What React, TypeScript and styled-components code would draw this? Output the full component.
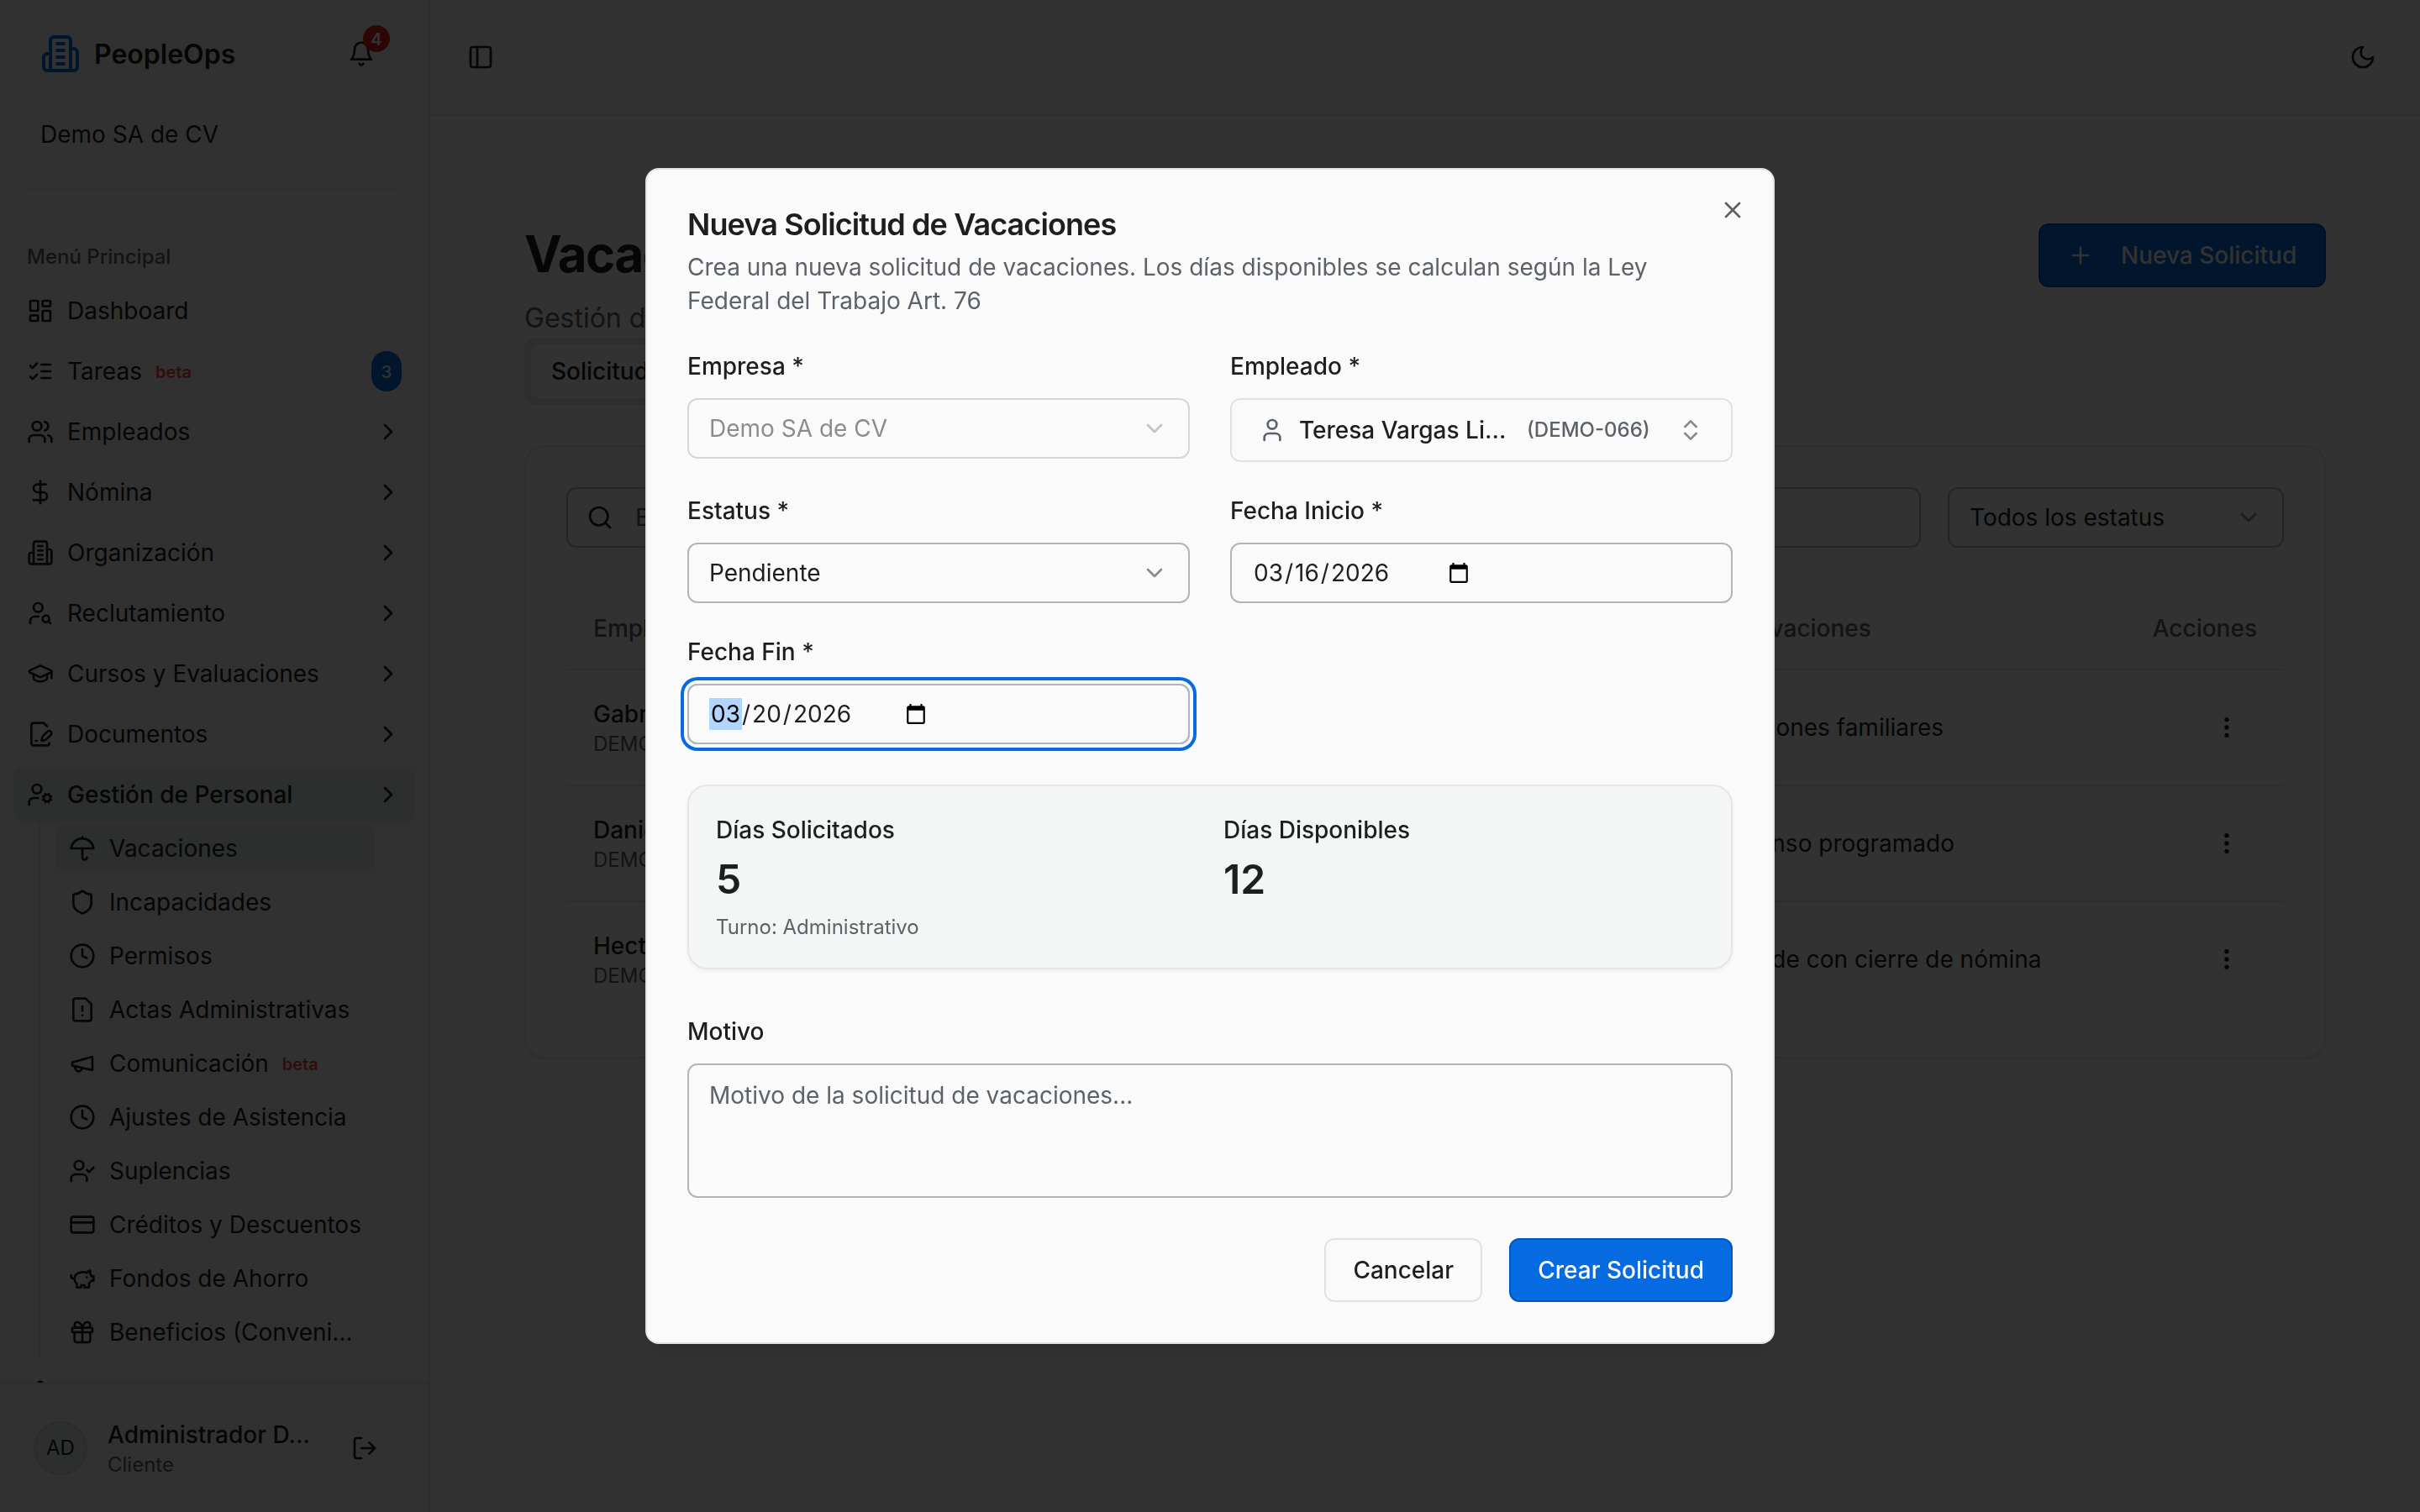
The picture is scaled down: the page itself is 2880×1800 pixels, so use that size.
import type { FunctionComponent, ReactNode } from 'react';
import styled, { createGlobalStyle, css } from 'styled-components';
import {
  ChevronDown,
  ChevronRight,
  ChevronsUpDown,
  CreditCard,
  DollarSign,
  EllipsisVertical,
  GraduationCap,
  LayoutDashboard,
  LogOut,
  PanelLeft,
  Plus,
  Search,
  Shield,
  User,
  UserCog,
  UserSearch,
  Users,
  X,
} from 'lucide-react';

interface IconProps {
  size?: number;
}

type IconType = FunctionComponent<IconProps>;

const makeIcon = (shape: ReactNode): IconType => {
  const Icon: IconType = ({ size = 32 }) => (
    <svg
      width={size}
      height={size}
      viewBox="0 0 24 24"
      fill="none"
      stroke="currentColor"
      strokeWidth={2}
      strokeLinecap="round"
      strokeLinejoin="round"
    >
      {shape}
    </svg>
  );
  return Icon;
};

const BuildingIcon = makeIcon(
  <>
    <path d="M6 22V4a2 2 0 0 1 2-2h8a2 2 0 0 1 2 2v18Z" />
    <path d="M6 12H4a2 2 0 0 0-2 2v6a2 2 0 0 0 2 2h2" />
    <path d="M18 9h2a2 2 0 0 1 2 2v9a2 2 0 0 1-2 2h-2" />
    <path d="M10 6h4M10 10h4M10 14h4M10 18h4" />
  </>,
);

const BellIcon = makeIcon(
  <>
    <path d="M6 8a6 6 0 0 1 12 0c0 7 3 9 3 9H3s3-2 3-9" />
    <path d="M10.3 21a1.94 1.94 0 0 0 3.4 0" />
  </>,
);

const MoonIcon = makeIcon(<path d="M12 3a6 6 0 0 0 9 9 9 9 0 1 1-9-9Z" />);

const ListChecksIcon = makeIcon(
  <path d="m3 17 2 2 4-4M3 7l2 2 4-4M13 6h8M13 12h8M13 18h8" />,
);

const FilePenIcon = makeIcon(
  <>
    <path d="m18 5-2.414-2.414A2 2 0 0 0 14.172 2H6a2 2 0 0 0-2 2v16a2 2 0 0 0 2 2h12a2 2 0 0 0 2-2" />
    <path d="M21.378 12.626a1 1 0 0 0-3.004-3.004l-4.01 4.012a2 2 0 0 0-.506.854l-.837 2.87a.5.5 0 0 0 .62.62l2.87-.837a2 2 0 0 0 .854-.506z" />
    <path d="M8 18h1" />
  </>,
);

const UmbrellaIcon = makeIcon(
  <>
    <path d="M22 12a10.06 10.06 1 0 0-20 0Z" />
    <path d="M12 12v8a2 2 0 0 0 4 0" />
    <path d="M12 2v1" />
  </>,
);

const ClockIcon = makeIcon(
  <>
    <circle cx="12" cy="12" r="10" />
    <path d="M12 6v6l4 2" />
  </>,
);

const FileWarningIcon = makeIcon(
  <>
    <path d="M15 2H6a2 2 0 0 0-2 2v16a2 2 0 0 0 2 2h12a2 2 0 0 0 2-2V7Z" />
    <path d="M12 9v4" />
    <path d="M12 17h.01" />
  </>,
);

const MegaphoneIcon = makeIcon(
  <>
    <path d="m3 11 18-5v12L3 14v-3z" />
    <path d="M11.6 16.8a3 3 0 1 1-5.8-1.6" />
  </>,
);

const UserCheckIcon = makeIcon(
  <>
    <path d="M16 21v-2a4 4 0 0 0-4-4H6a4 4 0 0 0-4 4v2" />
    <circle cx="9" cy="7" r="4" />
    <path d="m16 11 2 2 4-4" />
  </>,
);

const PiggyBankIcon = makeIcon(
  <>
    <path d="M19 5c-1.5 0-2.8 1.4-3 2-3.5-1.5-11-.3-11 5 0 1.8 0 3 2 4.5V20h4v-2h3v2h4v-4c1-.5 1.7-1 2-2h2v-4h-2c0-1-.5-1.5-1-2V5z" />
    <path d="M2 9v1c0 1.1.9 2 2 2h1" />
    <path d="M16 11h.01" />
  </>,
);

const GiftIcon = makeIcon(
  <>
    <rect x="3" y="8" width="18" height="4" rx="1" />
    <path d="M12 8v13" />
    <path d="M19 12v7a2 2 0 0 1-2 2H7a2 2 0 0 1-2-2v-7" />
    <path d="M7.5 8a2.5 2.5 0 0 1 0-5A4.8 8 0 0 1 12 8a4.8 8 0 0 1 4.5-5 2.5 2.5 0 0 1 0 5" />
  </>,
);

const CalendarIcon: IconType = ({ size = 26 }) => (
  <svg width={size} height={size} viewBox="0 0 24 24" fill="#000">
    <path d="M20 3h-1V1h-2v2H7V1H5v2H4c-1.1 0-2 .9-2 2v16c0 1.1.9 2 2 2h16c1.1 0 2-.9 2-2V5c0-1.1-.9-2-2-2zm0 18H4V8h16v13z" />
  </svg>
);

interface NavEntry {
  label: string;
  icon: IconType;
  beta?: boolean;
  badge?: number;
  active?: boolean;
  expandable?: boolean;
}

const navItems: NavEntry[] = [
  { label: 'Dashboard', icon: LayoutDashboard },
  { label: 'Tareas', icon: ListChecksIcon, beta: true, badge: 3 },
  { label: 'Empleados', icon: Users, expandable: true },
  { label: 'Nómina', icon: DollarSign, expandable: true },
  { label: 'Organización', icon: BuildingIcon, expandable: true },
  { label: 'Reclutamiento', icon: UserSearch, expandable: true },
  { label: 'Cursos y Evaluaciones', icon: GraduationCap, expandable: true },
  { label: 'Documentos', icon: FilePenIcon, expandable: true },
  { label: 'Gestión de Personal', icon: UserCog, expandable: true, active: true },
];

const subItems: NavEntry[] = [
  { label: 'Vacaciones', icon: UmbrellaIcon, active: true },
  { label: 'Incapacidades', icon: Shield },
  { label: 'Permisos', icon: ClockIcon },
  { label: 'Actas Administrativas', icon: FileWarningIcon },
  { label: 'Comunicación', icon: MegaphoneIcon, beta: true },
  { label: 'Ajustes de Asistencia', icon: ClockIcon },
  { label: 'Suplencias', icon: UserCheckIcon },
  { label: 'Créditos y Descuentos', icon: CreditCard },
  { label: 'Fondos de Ahorro', icon: PiggyBankIcon },
  { label: 'Beneficios (Conveni…', icon: GiftIcon },
];

const requests = [
  { name: 'Gabriela', code: 'DEMO-012', notes: 'Vacaciones familiares' },
  { name: 'Daniel', code: 'DEMO-024', notes: 'Descanso programado' },
  { name: 'Hector', code: 'DEMO-031', notes: 'Coincide con cierre de nómina' },
];

const Sidebar: FunctionComponent = () => (
  <SidebarRoot>
    <SidebarHeader>
      <BrandRow>
        <Brand>
          <BrandMark>
            <BuildingIcon size={48} />
          </BrandMark>
          <BrandName>PeopleOps</BrandName>
        </Brand>
        <BellButton>
          <BellIcon />
          <BellCount>4</BellCount>
        </BellButton>
      </BrandRow>
      <Company>Demo SA de CV</Company>
    </SidebarHeader>
    <SidebarSeparator />
    <SidebarScroll>
      <GroupLabel>Menú Principal</GroupLabel>
      <NavList>
        {navItems.map(({ label, icon: Icon, beta, badge, active, expandable }) => (
          <NavRow key={label} $active={active}>
            <Icon size={32} />
            <span>{label}</span>
            {beta && <Beta>beta</Beta>}
            {badge && <NavBadge>{badge}</NavBadge>}
            {expandable && (
              <NavChevron>
                <ChevronRight size={32} />
              </NavChevron>
            )}
          </NavRow>
        ))}
      </NavList>
      <SubList>
        {subItems.map(({ label, icon: Icon, beta, active }) => (
          <SubRow key={label} $active={active}>
            <Icon size={32} />
            <span>{label}</span>
            {beta && <Beta>beta</Beta>}
          </SubRow>
        ))}
      </SubList>
      <NextNavRow>
        <Shield size={32} />
      </NextNavRow>
    </SidebarScroll>
    <SidebarFooter>
      <Avatar>AD</Avatar>
      <UserInfo>
        <UserName>Administrador D…</UserName>
        <UserRole>Cliente</UserRole>
      </UserInfo>
      <LogOut size={32} />
    </SidebarFooter>
  </SidebarRoot>
);

const VacationsPage: FunctionComponent = () => (
  <Main>
    <TopBar>
      <PanelLeft size={32} />
      <MoonIcon />
    </TopBar>
    <Content>
      <PageHeader>
        <div>
          <PageTitle>Vacaciones</PageTitle>
          <PageSubtitle>Gestión de solicitudes de vacaciones</PageSubtitle>
        </div>
        <NewButton>
          <Plus size={32} />
          Nueva Solicitud
        </NewButton>
      </PageHeader>
      <Tabs>
        <Tab>Solicitudes</Tab>
      </Tabs>
      <Card>
        <Filters>
          <SearchBox>
            <Search size={32} />
            <span>Buscar...</span>
          </SearchBox>
          <StatusFilter>
            Todos los estatus
            <Faded>
              <ChevronDown size={32} />
            </Faded>
          </StatusFilter>
        </Filters>
        <TableHead>
          <span>Empleado</span>
          <span>Observaciones</span>
          <ActionsHead>Acciones</ActionsHead>
        </TableHead>
        {requests.map(({ name, code, notes }) => (
          <TableRow key={code}>
            <div>
              <EmployeeName>{name}</EmployeeName>
              <EmployeeCode>{code}</EmployeeCode>
            </div>
            <span>{notes}</span>
            <RowMenu>
              <EllipsisVertical size={32} />
            </RowMenu>
          </TableRow>
        ))}
      </Card>
    </Content>
  </Main>
);

interface DateValueProps {
  month: string;
  day: string;
  year: string;
  editing?: boolean;
}

const DateValue: FunctionComponent<DateValueProps> = ({ month, day, year, editing }) => (
  <>
    <DateText>
      <DatePart $selected={editing}>{month}</DatePart>/<DatePart>{day}</DatePart>/
      <DatePart>{year}</DatePart>
    </DateText>
    <CalendarIcon />
  </>
);

const RequestDialog: FunctionComponent = () => (
  <Dialog role="dialog">
    <CloseButton aria-label="Cerrar">
      <X size={32} />
    </CloseButton>
    <DialogTitle>Nueva Solicitud de Vacaciones</DialogTitle>
    <DialogDescription>
      Crea una nueva solicitud de vacaciones. Los días disponibles se calculan según la Ley
      Federal del Trabajo Art. 76
    </DialogDescription>
    <FormGrid>
      <Field>
        <Label>Empresa *</Label>
        <Select $disabled>
          Demo SA de CV
          <Faded>
            <ChevronDown size={32} />
          </Faded>
        </Select>
      </Field>
      <Field>
        <Label>Empleado *</Label>
        <EmployeePicker>
          <User size={32} />
          <PickedName>Teresa Vargas Li…</PickedName>
          <PickedCode>(DEMO-066)</PickedCode>
          <Faded>
            <ChevronsUpDown size={32} />
          </Faded>
        </EmployeePicker>
      </Field>
      <Field>
        <Label>Estatus *</Label>
        <Select>
          Pendiente
          <Faded>
            <ChevronDown size={32} />
          </Faded>
        </Select>
      </Field>
      <Field>
        <Label>Fecha Inicio *</Label>
        <DateInput>
          <DateValue month="03" day="16" year="2026" />
        </DateInput>
      </Field>
      <Field>
        <Label>Fecha Fin *</Label>
        <DateInput $focused>
          <DateValue month="03" day="20" year="2026" editing />
        </DateInput>
      </Field>
    </FormGrid>
    <Summary>
      <div>
        <SummaryLabel>Días Solicitados</SummaryLabel>
        <SummaryValue>5</SummaryValue>
        <SummaryNote>Turno: Administrativo</SummaryNote>
      </div>
      <div>
        <SummaryLabel>Días Disponibles</SummaryLabel>
        <SummaryValue>12</SummaryValue>
      </div>
    </Summary>
    <ReasonField>
      <Label>Motivo</Label>
      <ReasonBox>Motivo de la solicitud de vacaciones...</ReasonBox>
    </ReasonField>
    <DialogFooter>
      <DialogButton>Cancelar</DialogButton>
      <DialogButton $primary>Crear Solicitud</DialogButton>
    </DialogFooter>
  </Dialog>
);

const App: FunctionComponent = () => (
  <>
    <GlobalStyle />
    <Screen>
      <Sidebar />
      <VacationsPage />
    </Screen>
    <Overlay>
      <RequestDialog />
    </Overlay>
  </>
);

const GlobalStyle = createGlobalStyle`
  :root {
    --background: #fafafa;
    --sidebar: #f5f5f5;
    --foreground: #1c1e20;
    --muted: #f4f6f5;
    --muted-foreground: #5c6269;
    --accent: #e1e6e4;
    --border: #e1e3e3;
    --input: #b0b5bb;
    --primary: #066ae1;
    --primary-border: #0058c2;
    --destructive: #dc1c1c;
  }

  * {
    box-sizing: border-box;
  }

  body {
    margin: 0;
    background: var(--background);
    color: var(--foreground);
    font-family: Inter, sans-serif;
    font-size: 28px;
    line-height: 40px;
    overflow: hidden;
  }

  button {
    font: inherit;
    color: inherit;
  }

  svg {
    display: block;
    flex-shrink: 0;
  }
`;

const Screen = styled.div`
  display: flex;
  width: 2880px;
  height: 1800px;
`;

const SidebarRoot = styled.aside`
  display: flex;
  flex-direction: column;
  width: 512px;
  height: 100%;
  background: var(--sidebar);
  border-right: 2px solid var(--border);
`;

const SidebarHeader = styled.div`
  height: 224px;
  padding: 32px 48px 0;
`;

const BrandRow = styled.div`
  display: flex;
  align-items: center;
  justify-content: space-between;
  height: 64px;
`;

const Brand = styled.div`
  display: flex;
  align-items: center;
  gap: 16px;
`;

const BrandMark = styled.span`
  color: var(--primary);
`;

const BrandName = styled.span`
  padding-top: 2px;
  font-size: 32px;
  font-weight: 600;
`;

const BellButton = styled.div`
  position: relative;
  margin-right: 16px;
`;

const BellCount = styled.span`
  position: absolute;
  top: -18px;
  right: -18px;
  display: flex;
  align-items: center;
  justify-content: center;
  width: 32px;
  height: 32px;
  padding-top: 1px;
  border-radius: 50%;
  background: var(--destructive);
  color: var(--background);
  font-size: 20px;
  font-weight: 600;
  line-height: 1;
`;

const Company = styled.div`
  margin-top: 44px;
`;

const SidebarSeparator = styled.div`
  height: 2px;
  margin: 0 32px;
  background: #e9ebeb;
`;

const SidebarScroll = styled.div`
  flex: 1;
  min-height: 0;
  padding: 48px 16px 0;
  overflow: hidden;
`;

const GroupLabel = styled.div`
  display: flex;
  align-items: center;
  height: 64px;
  padding: 0 16px;
  color: var(--muted-foreground);
  font-size: 24px;
  font-weight: 500;
`;

const NavList = styled.div`
  display: flex;
  flex-direction: column;
  gap: 8px;
`;

const NavRow = styled.div<{ $active?: boolean }>`
  display: flex;
  align-items: center;
  gap: 16px;
  height: 64px;
  padding: 0 16px;
  border-radius: 12px;
  background: ${({ $active }) => ($active ? 'var(--accent)' : 'transparent')};
  font-weight: ${({ $active }) => ($active ? 500 : 400)};
`;

const NextNavRow = styled(NavRow)`
  margin-top: 8px;
`;

const NavChevron = styled.span`
  margin-left: auto;
`;

const Beta = styled.span`
  padding-top: 1px;
  color: #ef4444;
  font-size: 20px;
  font-weight: 600;
`;

const NavBadge = styled.span`
  display: flex;
  align-items: center;
  justify-content: center;
  width: 36px;
  height: 48px;
  margin-left: auto;
  padding-top: 1px;
  border-radius: 18px;
  background: var(--primary);
  color: var(--background);
  font-size: 20px;
  font-weight: 500;
`;

const SubList = styled.div`
  display: flex;
  flex-direction: column;
  gap: 8px;
  margin: 0 48px 0 30px;
  padding: 4px 0 4px 18px;
  border-left: 2px solid var(--border);
`;

const SubRow = styled(NavRow)`
  height: 56px;
  font-weight: 400;
`;

const SidebarFooter = styled.div`
  display: flex;
  align-items: center;
  height: 154px;
  padding: 0 60px 0 40px;
  border-top: 2px solid var(--border);
`;

const Avatar = styled.div`
  display: flex;
  align-items: center;
  justify-content: center;
  width: 64px;
  height: 64px;
  margin-right: 24px;
  border: 2px solid #d3d8d6;
  border-radius: 50%;
  background: var(--accent);
  font-size: 24px;
`;

const UserInfo = styled.div`
  flex: 1;
`;

const UserName = styled.div`
  font-weight: 500;
`;

const UserRole = styled.div`
  color: var(--muted-foreground);
  font-size: 24px;
  line-height: 32px;
`;

const Main = styled.main`
  flex: 1;
`;

const TopBar = styled.header`
  display: flex;
  align-items: center;
  justify-content: space-between;
  height: 138px;
  padding: 0 52px 0 44px;
  border-bottom: 2px solid var(--border);
`;

const Content = styled.div`
  padding: 128px 112px 0;
`;

const PageHeader = styled.div`
  display: flex;
  justify-content: space-between;
  height: 136px;
`;

const PageTitle = styled.h1`
  margin: 0;
  font-size: 60px;
  font-weight: 700;
  line-height: 72px;
  letter-spacing: -1.5px;
`;

const PageSubtitle = styled.p`
  margin: 17px 0 0;
  color: var(--muted-foreground);
  font-size: 32px;
  line-height: 48px;
`;

const NewButton = styled.button`
  display: flex;
  align-items: center;
  gap: 32px;
  width: 342px;
  height: 76px;
  padding: 0 32px;
  border: 2px solid var(--primary-border);
  border-radius: 12px;
  background: var(--primary);
  color: var(--background);
  font-weight: 500;
  white-space: nowrap;
`;

const Tabs = styled.div`
  display: inline-flex;
  height: 80px;
  padding: 8px;
  border-radius: 12px;
  background: var(--accent);
`;

const Tab = styled.div`
  display: flex;
  align-items: center;
  height: 64px;
  padding: 0 24px;
  border-radius: 8px;
  background: var(--background);
  font-weight: 500;
`;

const Card = styled.section`
  height: 730px;
  margin-top: 48px;
  padding: 48px;
  border: 2px solid var(--border);
  border-radius: 24px;
  box-shadow: 0 2px 4px rgba(0, 0, 0, 0.05);
`;

const Filters = styled.div`
  display: flex;
  gap: 32px;
  margin-bottom: 48px;
`;

const inputBox = css`
  display: flex;
  align-items: center;
  height: 72px;
  padding: 0 24px;
  border: 2px solid var(--input);
  border-radius: 12px;
`;

const SearchBox = styled.div`
  ${inputBox}
  flex: 1;
  gap: 26px;
  padding: 0 22px;

  span {
    color: var(--muted-foreground);
  }
`;

const StatusFilter = styled.div`
  ${inputBox}
  justify-content: space-between;
  width: 400px;
`;

const Faded = styled.span`
  opacity: 0.5;
`;

const tableGrid = css`
  display: grid;
  grid-template-columns: 1319px 1fr auto;
  align-items: center;
  padding: 0 32px;
`;

const TableHead = styled.div`
  ${tableGrid}
  height: 98px;
  border-bottom: 2px solid var(--border);
  color: var(--muted-foreground);
  font-weight: 500;
`;

const ActionsHead = styled.span`
  text-align: right;
`;

const TableRow = styled.div`
  ${tableGrid}
  height: 138px;

  &:not(:last-child) {
    border-bottom: 2px solid var(--border);
  }

  &:last-child {
    height: 136px;
  }
`;

const EmployeeName = styled.div`
  font-weight: 500;
`;

const EmployeeCode = styled.div`
  color: var(--muted-foreground);
  font-size: 24px;
  line-height: 32px;
`;

const RowMenu = styled.span`
  padding: 20px;
`;

const Overlay = styled.div`
  position: fixed;
  inset: 0;
  display: flex;
  align-items: center;
  justify-content: center;
  background: rgba(0, 0, 0, 0.8);
`;

const Dialog = styled.div`
  position: relative;
  width: 1344px;
  height: 1400px;
  padding: 47px 48px 48px;
  border: 2px solid var(--border);
  border-radius: 16px;
  background: var(--background);
  box-shadow: 0 20px 30px -6px rgba(0, 0, 0, 0.1), 0 8px 12px -8px rgba(0, 0, 0, 0.1);
`;

const CloseButton = styled.button`
  position: absolute;
  top: 32px;
  right: 32px;
  padding: 0;
  border: none;
  background: none;
  opacity: 0.7;
`;

const DialogTitle = styled.h2`
  margin: 0;
  font-size: 36px;
  font-weight: 600;
  line-height: 36px;
  letter-spacing: -0.9px;
`;

const DialogDescription = styled.p`
  margin: 13px 0 44px;
  color: var(--muted-foreground);
`;

const FormGrid = styled.div`
  display: grid;
  grid-template-columns: 1fr 1fr;
  gap: 44px 48px;
`;

const Field = styled.div`
  display: flex;
  flex-direction: column;
  gap: 24px;
`;

const Label = styled.label`
  font-weight: 500;
  line-height: 28px;
`;

const Select = styled.div<{ $disabled?: boolean }>`
  ${inputBox}
  justify-content: space-between;
  opacity: ${({ $disabled }) => ($disabled ? 0.5 : 1)};
`;

const EmployeePicker = styled.div`
  display: flex;
  align-items: center;
  height: 76px;
  padding: 0 32px;
  border: 2px solid var(--border);
  border-radius: 12px;
  font-weight: 500;

  > svg {
    margin-right: 16px;
    color: var(--muted-foreground);
  }
`;

const PickedName = styled.span`
  width: 271px;
  white-space: nowrap;
`;

const PickedCode = styled.span`
  flex: 1;
  color: var(--muted-foreground);
  font-size: 24px;
`;

const DateInput = styled.div<{ $focused?: boolean }>`
  ${inputBox}
  box-shadow: ${({ $focused }) =>
    ($focused ? '0 0 0 4px var(--background), 0 0 0 8px var(--primary)' : 'none')};
`;

const DateText = styled.span`
  display: flex;
  align-items: center;
  width: 233px;
`;

const DatePart = styled.span<{ $selected?: boolean }>`
  padding: 0 2px;
  line-height: 38px;
  background: ${({ $selected }) => ($selected ? '#b2d5fe' : 'transparent')};
  color: ${({ $selected }) => ($selected ? '#000' : 'inherit')};
`;

const Summary = styled.div`
  display: grid;
  grid-template-columns: 1fr 1fr;
  gap: 32px;
  height: 220px;
  margin: 48px 0 60px;
  padding: 32px;
  border: 2px solid #e4e6e6;
  border-radius: 24px;
  background: var(--muted);
  box-shadow: 0 2px 4px rgba(0, 0, 0, 0.05);
`;

const SummaryLabel = styled.div`
  font-weight: 500;
`;

const SummaryValue = styled.div`
  margin: 7px 0 9px;
  font-size: 48px;
  font-weight: 600;
  line-height: 64px;
`;

const SummaryNote = styled.div`
  color: var(--muted-foreground);
  font-size: 24px;
  line-height: 32px;
`;

const ReasonField = styled(Field)`
  margin-bottom: 48px;
`;

const ReasonBox = styled.div`
  height: 160px;
  padding: 16px 24px;
  border: 2px solid var(--input);
  border-radius: 12px;
  color: var(--muted-foreground);
`;

const DialogFooter = styled.div`
  display: flex;
  justify-content: flex-end;
  gap: 32px;
`;

const DialogButton = styled.button<{ $primary?: boolean }>`
  min-width: 188px;
  height: 76px;
  padding: 0 32px;
  border: 2px solid ${({ $primary }) => ($primary ? 'var(--primary-border)' : 'var(--border)')};
  border-radius: 12px;
  background: ${({ $primary }) => ($primary ? 'var(--primary)' : 'transparent')};
  color: ${({ $primary }) => ($primary ? 'var(--background)' : 'inherit')};
  font-weight: 500;
`;

export default App;
